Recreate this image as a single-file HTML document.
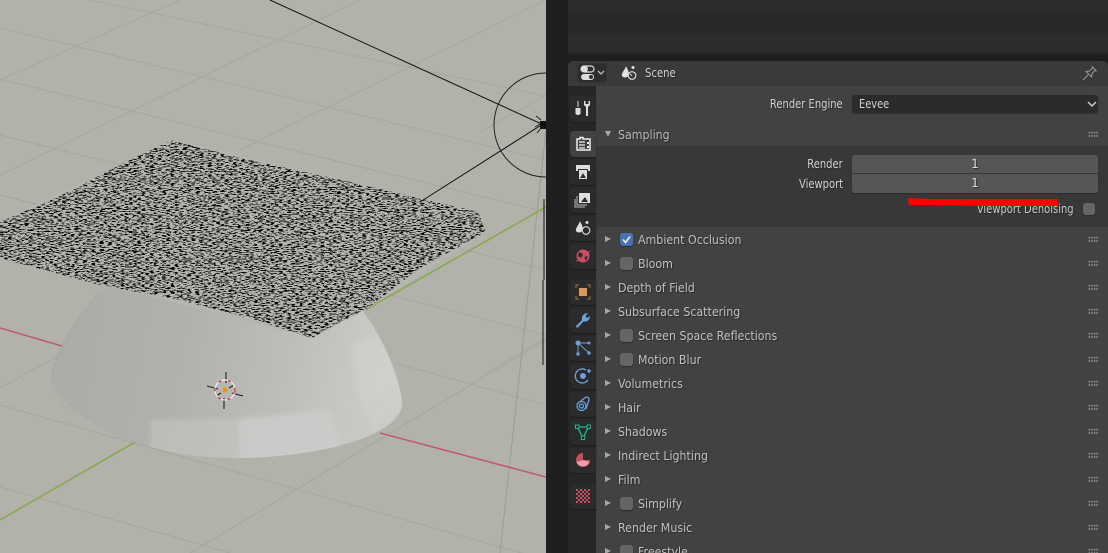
<!DOCTYPE html>
<html><head><meta charset="utf-8"><style>
html,body{margin:0;padding:0;width:1108px;height:553px;overflow:hidden;background:#1f1f1f}
#root{position:relative;width:1108px;height:553px;overflow:hidden;font-family:"DejaVu Sans","Liberation Sans",sans-serif;font-size:12px;color:#c0c0c0}
.a{position:absolute}
.t{position:absolute;line-height:24px;height:24px;white-space:nowrap;text-shadow:1px 1px 1px #2a2a2a;transform:scaleX(.92);transform-origin:0 50%}
.r{text-align:right;transform:scaleX(.83);transform-origin:100% 50%}
.c{transform:none}
.tri{position:absolute;left:605px;width:0;height:0;border-left:6px solid #a8a8a8;border-top:3.500px solid transparent;border-bottom:3.500px solid transparent;margin-top:1px}
.cb{position:absolute;left:620px;width:13px;height:13px;border-radius:3px;background:#656565;box-shadow:0 1px 1px #2c2c2c}
.tab{position:absolute;left:570px;width:26px;height:26px;background:#2b2b2b;border-radius:4px 0 0 4px;box-shadow:0 1px 1px #1d1d1d}
.dots{position:absolute;left:1088px;width:10px;height:7px;background-image:radial-gradient(#8a8a8a 0.7px,transparent 0.9px);background-size:2.600px 3.300px}
svg.i{position:absolute;left:573px;width:20px;height:20px}
</style></head><body><div id="root">

<svg class="a" style="left:0;top:0" width="546" height="553" viewBox="0 0 546 553">
<defs>
<filter id="n" x="0" y="0" width="100%" height="100%" color-interpolation-filters="sRGB">
<feTurbulence type="fractalNoise" baseFrequency="0.24 0.95" numOctaves="2" seed="7"/>
<feColorMatrix type="matrix" values="0 0 0 0 0  0 0 0 0 0  0 0 0 0 0  14 0 0 0 -7.300"/>
</filter>
<filter id="b" x="-10%" y="-10%" width="120%" height="120%"><feGaussianBlur stdDeviation="2"/></filter>
<linearGradient id="dome" x1="0" x2="1" y1="0" y2="0.1">
<stop offset="0" stop-color="#a9aca6"/><stop offset=".4" stop-color="#afb1ac"/><stop offset=".7" stop-color="#bbbdb8"/><stop offset="1" stop-color="#cbcdc8"/>
</linearGradient>
<clipPath id="top"><polygon points="0,222 60,196 120,165 172,140 240,158 350,182 478,212 486,232 420,268 365,310 340,322 312,338 250,318 180,300 100,285 0,258"/></clipPath>
<clipPath id="domeclip"><path d="M100,290 C80,315 56,350 52,372 C50,392 70,412 110,433 C150,450 190,458 235,458 C290,458 345,448 375,433 C395,423 403,412 402,402 C400,380 385,340 362,310 L200,270 Z"/></clipPath>
</defs>
<rect width="546" height="553" fill="#b2b2ab"/>
<g stroke="#a6a69f" stroke-width="1" fill="none">
<line x1="90" y1="0" x2="546" y2="96"/>
<line x1="0" y1="28" x2="546" y2="160"/>
<line x1="0" y1="79" x2="546" y2="212"/>
<line x1="0" y1="135" x2="546" y2="270"/>
<line x1="0" y1="195" x2="546" y2="335"/>
<line x1="395" y1="363" x2="546" y2="405"/>
<line x1="0" y1="405" x2="546" y2="560"/>
<line x1="0" y1="487" x2="230" y2="553"/>
<line x1="0" y1="80" x2="180" y2="0"/>
<line x1="0" y1="175" x2="360" y2="0"/>
<line x1="240" y1="150" x2="546" y2="0"/>
<line x1="480" y1="132" x2="546" y2="95"/>
<line x1="0" y1="388" x2="60" y2="355"/>
<line x1="190" y1="553" x2="546" y2="340"/>
<line x1="480" y1="377" x2="546" y2="338"/>
<line x1="546" y1="130" x2="500" y2="553" stroke="#9c9c96"/>
</g>
<line x1="0" y1="328" x2="62" y2="346" stroke="#c0586d" stroke-width="1.500"/>
<line x1="380" y1="433" x2="546" y2="477" stroke="#c0586d" stroke-width="1.500"/>
<line x1="0" y1="520" x2="137" y2="441" stroke="#87a94e" stroke-width="1.600"/>
<line x1="365" y1="310" x2="546" y2="207" stroke="#87a94e" stroke-width="1.600"/>

<path d="M100,290 C80,315 56,350 52,372 C50,392 70,412 110,433 C150,450 190,458 235,458 C290,458 345,448 375,433 C395,423 403,412 402,402 C400,380 385,340 362,310 L200,270 Z" fill="url(#dome)"/>
<g clip-path="url(#domeclip)"><g filter="url(#b)">
<polygon points="150,420 240,418 350,405 402,385 402,470 150,470" fill="#c4c7c3" opacity=".55"/>
<polygon points="238,420 330,410 345,470 240,470" fill="#cccfcb" opacity=".7"/>
<polygon points="350,345 385,335 405,405 375,430 360,400" fill="#d2d4cf" opacity=".5"/>
</g></g>
<path d="M100,290 C80,315 56,350 52,372 C50,392 60,402 75,415" fill="none" stroke="#9a9c96" stroke-width="1.500" stroke-dasharray="1 1.500" opacity=".6"/>

<polygon points="0,222 172,140 478,212 486,232 365,310 312,338 0,258" fill="#b6b6b0"/>
<rect x="0" y="135" width="490" height="208" filter="url(#n)" clip-path="url(#top)"/>

<polyline points="270,0 546,126" stroke="#111" fill="none" stroke-width="1"/>
<polyline points="420,202 546,122" stroke="#111" fill="none" stroke-width="1"/>
<path d="M546,73 A52,52 0 1 0 546,177" fill="none" stroke="#222" stroke-width="1"/>
<rect x="540" y="121" width="6" height="8" fill="#111"/>
<path d="M536,116 L541,120 M535,127 L540,124 M537,133 L541,128" stroke="#222"/>
<line x1="544" y1="199" x2="544" y2="280" stroke="#111"/>
<line x1="543" y1="280" x2="543" y2="365" stroke="#111"/>

<g stroke="#222" stroke-width="1.100">
<line x1="226" y1="372" x2="226" y2="383"/><line x1="224" y1="398" x2="224" y2="409"/>
<line x1="207" y1="386" x2="218" y2="389"/><line x1="232" y1="393" x2="243" y2="396"/>
<line x1="216" y1="396" x2="221" y2="393"/><line x1="229" y1="388" x2="234" y2="385"/>
</g>
<circle cx="225" cy="390" r="10" fill="none" stroke="#eee" stroke-width="1.300"/>
<circle cx="225" cy="390" r="10" fill="none" stroke="#d33" stroke-width="1.300" stroke-dasharray="3 7"/>
<circle cx="225" cy="390" r="2.500" fill="#f0930f"/>
</svg>

<div class="a" style="left:546px;top:0;width:22px;height:553px;background:#1f1f1f"></div>
<div class="a" style="left:568px;top:0;width:540px;height:55px;background:#2c2c2c;border-radius:0 0 0 5px"></div>
<div class="a" style="left:568px;top:13px;width:540px;height:20px;background:#282828"></div>
<div class="a" style="left:568px;top:53px;width:540px;height:2px;background:#232323"></div>

<div class="a" style="left:568px;top:61px;width:540px;height:492px;background:#262626;border-radius:5px 5px 0 0"></div>
<div class="a" style="left:568px;top:61px;width:540px;height:25px;background:#3a3a3a;border-radius:5px 5px 0 0"></div>
<div class="a" style="left:596px;top:86px;width:512px;height:467px;background:#424242"></div>
<div class="a" style="left:596px;top:146px;width:512px;height:81px;background:#383838"></div>

<div class="a" style="left:577px;top:63px;width:30px;height:20px;background:#2d2d2d;border-radius:4px;box-shadow:inset 0 0 0 1px #333"></div>
<svg class="a" style="left:580px;top:65px" width="26" height="16" viewBox="0 0 26 16">
<rect x="1" y="1" width="13" height="6" rx="3" fill="none" stroke="#ddd" stroke-width="1.200"/><rect x="1" y="1" width="7" height="6" rx="3" fill="#ddd"/>
<rect x="1" y="9" width="13" height="6" rx="3" fill="#ddd"/><rect x="9" y="10" width="4" height="4" rx="2" fill="#2d2d2d"/>
<path d="M18,6 L21,9 L24,6" fill="none" stroke="#bbb" stroke-width="1.300"/></svg>
<svg class="a" style="left:621px;top:65px" width="16" height="16" viewBox="0 0 16 16">
<path d="M5,1 C6,4 9,7 7,11 C6,13 2,13 1,11 C0,8 4,5 5,1Z" fill="#e2e2e2"/><circle cx="12" cy="2.500" r="1.500" fill="#e2e2e2"/><circle cx="11" cy="10.500" r="3.800" fill="none" stroke="#e2e2e2" stroke-width="1.100"/><line x1="11" y1="10.500" x2="9" y2="9" stroke="#e2e2e2"/></svg>
<div class="t" style="left:645px;top:61px;color:#d0d0d0;transform:scaleX(.84)">Scene</div>
<svg class="a" style="left:1082px;top:65px" width="16" height="16" viewBox="0 0 16 16"><path d="M1,15 L6,10 M4,6.500 L9.500,12 L10,8.500 L13,5.500 L14.500,6 L10,1.500 L10.500,3 L7.500,6 Z" fill="none" stroke="#9a9a9a" stroke-width="1"/></svg>

<div class="t r" style="right:265px;top:92px;color:#d2d2d2">Render Engine</div>
<div class="a" style="left:852px;top:95px;width:246px;height:18px;background:#2b2b2b;border-radius:3px;box-shadow:0 1px 1px #333"></div>
<div class="t" style="left:859px;top:92px;color:#d2d2d2;transform:scaleX(.82)">Eevee</div>
<svg class="a" style="left:1087px;top:100px" width="10" height="8" viewBox="0 0 10 8"><path d="M1,2 L5,6 L9,2" fill="none" stroke="#ccc" stroke-width="1.500"/></svg>

<div class="a" style="left:605px;top:131px;width:0;height:0;border-top:6px solid #a8a8a8;border-left:3.500px solid transparent;border-right:3.500px solid transparent"></div>
<div class="t" style="left:618px;top:123px;color:#b8b8b8">Sampling</div>
<div class="dots" style="top:131px"></div>

<div class="t r" style="right:265px;top:152px;color:#d2d2d2">Render</div>
<div class="t r" style="right:265px;top:172px;color:#d2d2d2">Viewport</div>
<div class="a" style="left:852px;top:155px;width:246px;height:18px;background:#565656;border-radius:3px 3px 0 0"></div>
<div class="a" style="left:852px;top:174px;width:246px;height:19px;background:#565656;border-radius:0 0 3px 3px;box-shadow:0 1px 1px #2c2c2c"></div>
<div class="t c" style="left:852px;width:246px;text-align:center;top:152px;color:#ddd">1</div>
<div class="t c" style="left:852px;width:246px;text-align:center;top:171px;color:#ddd">1</div>
<div class="t r" style="right:34px;top:197px;color:#c8c8c8">Viewport Denoising</div>
<div class="cb" style="left:1083px;top:203px;width:12px;height:12px"></div>
<svg class="a" style="left:900px;top:190px" width="170" height="24" viewBox="0 0 170 24"><polygon points="8,8 30,9 158,9 158,16 90,16 30,15 9,15" fill="#f00"/></svg>

<div class="tri" style="top:235px"></div><div class="cb" style="top:233px;background:#4772b3"></div>
<svg class="a" style="left:620px;top:233px" width="13" height="13" viewBox="0 0 13 13"><path d="M3,6.500 L5.500,9.500 L10,3.500" fill="none" stroke="#e8e8e8" stroke-width="1.700"/></svg>
<div class="t" style="left:638px;top:228px">Ambient Occlusion</div><div class="dots" style="top:236px"></div>
<div class="tri" style="top:259px"></div><div class="cb" style="top:257px"></div><div class="t" style="left:638px;top:252px">Bloom</div><div class="dots" style="top:260px"></div>
<div class="tri" style="top:283px"></div><div class="t" style="left:618px;top:276px">Depth of Field</div><div class="dots" style="top:284px"></div>
<div class="tri" style="top:307px"></div><div class="t" style="left:618px;top:300px">Subsurface Scattering</div><div class="dots" style="top:308px"></div>
<div class="tri" style="top:331px"></div><div class="cb" style="top:329px"></div><div class="t" style="left:638px;top:324px">Screen Space Reflections</div><div class="dots" style="top:332px"></div>
<div class="tri" style="top:355px"></div><div class="cb" style="top:353px"></div><div class="t" style="left:638px;top:348px">Motion Blur</div><div class="dots" style="top:356px"></div>
<div class="tri" style="top:379px"></div><div class="t" style="left:618px;top:372px">Volumetrics</div><div class="dots" style="top:380px"></div>
<div class="tri" style="top:403px"></div><div class="t" style="left:618px;top:396px">Hair</div><div class="dots" style="top:404px"></div>
<div class="tri" style="top:427px"></div><div class="t" style="left:618px;top:420px">Shadows</div><div class="dots" style="top:428px"></div>
<div class="tri" style="top:451px"></div><div class="t" style="left:618px;top:444px">Indirect Lighting</div><div class="dots" style="top:452px"></div>
<div class="tri" style="top:475px"></div><div class="t" style="left:618px;top:468px">Film</div><div class="dots" style="top:476px"></div>
<div class="tri" style="top:499px"></div><div class="cb" style="top:497px"></div><div class="t" style="left:638px;top:492px">Simplify</div><div class="dots" style="top:500px"></div>
<div class="tri" style="top:523px"></div><div class="t" style="left:618px;top:516px">Render Music</div><div class="dots" style="top:524px"></div>
<div class="tri" style="top:547px"></div><div class="cb" style="top:545px"></div><div class="t" style="left:638px;top:540px">Freestyle</div><div class="dots" style="top:548px"></div>

<div class="tab" style="top:96px"></div>
<div class="tab" style="top:131px;background:#424242"></div>
<div class="tab" style="top:159px"></div>
<div class="tab" style="top:187px"></div>
<div class="tab" style="top:215px"></div>
<div class="tab" style="top:243px"></div>
<div class="tab" style="top:279px"></div>
<div class="tab" style="top:307px"></div>
<div class="tab" style="top:335px"></div>
<div class="tab" style="top:363px"></div>
<div class="tab" style="top:391px"></div>
<div class="tab" style="top:419px"></div>
<div class="tab" style="top:447px"></div>
<div class="tab" style="top:483px"></div>

<svg class="i" style="top:99px" viewBox="0 0 20 20"><path d="M5,2 V8" stroke="#ddd" stroke-width="1"/><path d="M2.500,9 H7.500 V15 Q5,17 2.500,15 Z" fill="#ddd"/><path d="M11,2 V6 L13,8 V17 H15 V8 L17,6 V2 L15.500,2 V5 H12.500 V2 Z" fill="#ddd"/></svg>
<svg class="i" style="top:134px" viewBox="0 0 20 20"><path d="M4,5 H7 V3.500 H10 V5 H17 V16 H4 Z" fill="none" stroke="#eee" stroke-width="1.500"/><path d="M6,8 H12 M6,11 H12 M6,14 H12" stroke="#eee" stroke-width="1.200"/><rect x="14" y="8" width="2" height="2" fill="#eee"/><rect x="14" y="12" width="2" height="2" fill="#eee"/></svg>
<svg class="i" style="top:162px" viewBox="0 0 20 20"><path d="M3,3 H17 V9 H15 V7 H5 V9 H3 Z" fill="#ddd"/><rect x="6" y="8" width="8" height="9" fill="#ddd"/><path d="M7,16 L10,11 L13,16 Z" fill="#333"/></svg>
<svg class="i" style="top:190px" viewBox="0 0 20 20"><rect x="6" y="3" width="11" height="10" fill="#ddd"/><path d="M8,12 L12,7 L15,12 Z" fill="#2b2b2b"/><path d="M4,6 V15 H14 M2,9 V17 H12" fill="none" stroke="#bbb" stroke-width="1"/></svg>
<svg class="i" style="top:218px" viewBox="0 0 20 20"><path d="M7,3 C8,6 11,9 9,13 C8,15 4,15 3,13 C2,10 6,7 7,3Z" fill="#ddd"/><circle cx="14" cy="4.500" r="1.500" fill="#ddd"/><circle cx="13" cy="12.500" r="3.800" fill="none" stroke="#ddd" stroke-width="1.100"/></svg>
<svg class="i" style="top:246px" viewBox="0 0 20 20"><circle cx="10" cy="10" r="6.500" fill="#c4505f"/><path d="M6,6 L10,8 L8,12 L5,10Z M11,11 L15,10 L13,15Z" fill="#2b2b2b"/><path d="M3,15 Q10,14 17,5" fill="none" stroke="#c4505f" stroke-width="1"/></svg>
<svg class="i" style="top:282px" viewBox="0 0 20 20"><rect x="6" y="6" width="8" height="8" fill="#d89a5c"/><path d="M3,6 V3 H6 M14,3 H17 V6 M17,14 V17 H14 M6,17 H3 V14" fill="none" stroke="#a5713f" stroke-width="1"/></svg>
<svg class="i" style="top:310px" viewBox="0 0 20 20"><path d="M3,16 L9,10 C8,6 11,3 15,3 L12.500,6 L14,8 L17,6 C17,10 14,12 10.500,11.500 L5,17.500 Q3,18 3,16Z" fill="#6f9fdb"/></svg>
<svg class="i" style="top:338px" viewBox="0 0 20 20"><circle cx="5" cy="5" r="2.500" fill="#6f9fdb"/><circle cx="5" cy="16" r="1.700" fill="#6f9fdb"/><circle cx="16" cy="5" r="1.500" fill="#6f9fdb"/><circle cx="16" cy="15" r="1.700" fill="#6f9fdb"/><path d="M5,6 V15 M6,5 H15 M6,6 L15,14" stroke="#6f9fdb" stroke-width="1"/></svg>
<svg class="i" style="top:366px" viewBox="0 0 20 20"><circle cx="10" cy="10" r="3" fill="#6f9fdb"/><path d="M15,14 A7,7 0 1 1 13,4" fill="none" stroke="#6f9fdb" stroke-width="1.300"/><circle cx="16" cy="5" r="1.700" fill="#6f9fdb"/></svg>
<svg class="i" style="top:394px" viewBox="0 0 20 20"><circle cx="8.500" cy="12" r="2" fill="none" stroke="#6f9fdb" stroke-width="1.300"/><circle cx="8.500" cy="12" r="4.500" fill="none" stroke="#6f9fdb" stroke-width="1.300"/><path d="M4,10 L13,3 Q16,3 16,6 L13,15" fill="none" stroke="#6f9fdb" stroke-width="1.300"/></svg>
<svg class="i" style="top:422px" viewBox="0 0 20 20"><path d="M4.500,5 H15.500 L10,16 Z" fill="none" stroke="#1fb88b" stroke-width="1.300"/><rect x="2.500" y="3" width="3.500" height="3.500" fill="#2b2b2b" stroke="#1fb88b"/><rect x="14" y="3" width="3.500" height="3.500" fill="#2b2b2b" stroke="#1fb88b"/><rect x="8.300" y="14" width="3.500" height="3.500" fill="#2b2b2b" stroke="#1fb88b"/></svg>
<svg class="i" style="top:450px" viewBox="0 0 20 20"><circle cx="10" cy="10" r="7" fill="#c4505f"/><path d="M10,3 A7,7 0 0 1 17,10 H10 Z" fill="#2b2b2b"/><path d="M3.500,12 L10,10 L16.500,12 A7,7 0 0 1 3.500,12Z" fill="#e6a0a8"/></svg>
<svg class="i" style="top:486px" viewBox="0 0 20 20"><rect x="3" y="3" width="14" height="14" fill="#c4505f"/><path d="M5,3H7V5H5Z M9,3H11V5H9Z M13,3H15V5H13Z M3,5H5V7H3Z M7,5H9V7H7Z M11,5H13V7H11Z M15,5H17V7H15Z M5,7H7V9H5Z M9,7H11V9H9Z M13,7H15V9H13Z M3,9H5V11H3Z M7,9H9V11H7Z M11,9H13V11H11Z M15,9H17V11H15Z M5,11H7V13H5Z M9,11H11V13H9Z M13,11H15V13H13Z M3,13H5V15H3Z M7,13H9V15H7Z M11,13H13V15H11Z M15,13H17V15H15Z M5,15H7V17H5Z M9,15H11V17H9Z M13,15H15V17H13Z" fill="#2b2b2b"/></svg>
</div></body></html>
